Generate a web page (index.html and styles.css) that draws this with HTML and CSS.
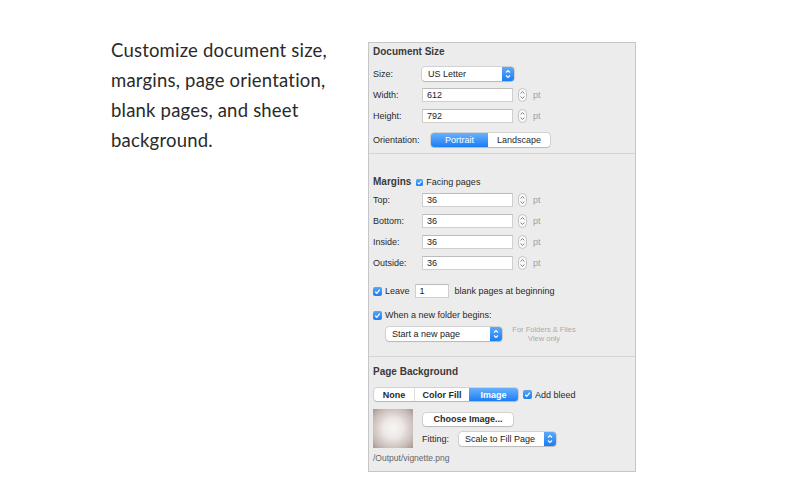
FILE: index.html
```html
<!DOCTYPE html>
<html>
<head>
<meta charset="utf-8">
<link rel="stylesheet" href="styles.css">
</head>
<body>
<div class="page">
  <p class="blurb">Customize document size,<br>margins, page orientation,<br>blank pages, and sheet<br>background.</p>
  <div class="panel">
    <section class="sec sec-size">
      <h2 class="head">Document Size</h2>
      <div class="row r-first">
        <span class="lbl">Size:</span>
        <div class="popup pop-size"><span class="ptext">US Letter</span><span class="cap"><svg width="12" height="14" viewBox="0 0 12 14"><path d="M4 5.5 L6 3.5 L8 5.5 M4 8.5 L6 10.5 L8 8.5" fill="none" stroke="#fff" stroke-width="1.1"/></svg></span></div>
      </div>
      <div class="row r-next">
        <span class="lbl">Width:</span>
        <div class="field">612</div>
        <svg class="stepper" width="9" height="14" viewBox="0 0 9 14"><rect x="0.5" y="0.5" width="8" height="13" rx="4" fill="#f9f9f9" stroke="#c4c4c4"/><path d="M2.6 5.4 L4.5 3.6 L6.4 5.4 M2.6 8.6 L4.5 10.4 L6.4 8.6" fill="none" stroke="#707070" stroke-width="0.9"/></svg>
        <span class="unit">pt</span>
      </div>
      <div class="row r-next">
        <span class="lbl">Height:</span>
        <div class="field">792</div>
        <svg class="stepper" width="9" height="14" viewBox="0 0 9 14"><rect x="0.5" y="0.5" width="8" height="13" rx="4" fill="#f9f9f9" stroke="#c4c4c4"/><path d="M2.6 5.4 L4.5 3.6 L6.4 5.4 M2.6 8.6 L4.5 10.4 L6.4 8.6" fill="none" stroke="#707070" stroke-width="0.9"/></svg>
        <span class="unit">pt</span>
      </div>
      <div class="row r-orient">
        <span class="lbl lbl-orient">Orientation:</span>
        <div class="seg seg-orient"><span class="on s-portrait">Portrait</span><span class="s-land">Landscape</span></div>
      </div>
    </section>

    <section class="sec sec-margins">
      <div class="head-row">
        <h2 class="head">Margins</h2>
        <span class="cb cb-small"><svg width="7" height="7" viewBox="0 0 7 7"><path d="M1.6 3.7 L3 5 L5.4 1.9" fill="none" stroke="#fff" stroke-width="1.1"/></svg></span>
        <span class="cb-text">Facing pages</span>
      </div>
      <div class="row r-top">
        <span class="lbl">Top:</span>
        <div class="field">36</div>
        <svg class="stepper" width="9" height="14" viewBox="0 0 9 14"><rect x="0.5" y="0.5" width="8" height="13" rx="4" fill="#f9f9f9" stroke="#c4c4c4"/><path d="M2.6 5.4 L4.5 3.6 L6.4 5.4 M2.6 8.6 L4.5 10.4 L6.4 8.6" fill="none" stroke="#707070" stroke-width="0.9"/></svg>
        <span class="unit">pt</span>
      </div>
      <div class="row r-next">
        <span class="lbl">Bottom:</span>
        <div class="field">36</div>
        <svg class="stepper" width="9" height="14" viewBox="0 0 9 14"><rect x="0.5" y="0.5" width="8" height="13" rx="4" fill="#f9f9f9" stroke="#c4c4c4"/><path d="M2.6 5.4 L4.5 3.6 L6.4 5.4 M2.6 8.6 L4.5 10.4 L6.4 8.6" fill="none" stroke="#707070" stroke-width="0.9"/></svg>
        <span class="unit">pt</span>
      </div>
      <div class="row r-next">
        <span class="lbl">Inside:</span>
        <div class="field">36</div>
        <svg class="stepper" width="9" height="14" viewBox="0 0 9 14"><rect x="0.5" y="0.5" width="8" height="13" rx="4" fill="#f9f9f9" stroke="#c4c4c4"/><path d="M2.6 5.4 L4.5 3.6 L6.4 5.4 M2.6 8.6 L4.5 10.4 L6.4 8.6" fill="none" stroke="#707070" stroke-width="0.9"/></svg>
        <span class="unit">pt</span>
      </div>
      <div class="row r-next">
        <span class="lbl">Outside:</span>
        <div class="field">36</div>
        <svg class="stepper" width="9" height="14" viewBox="0 0 9 14"><rect x="0.5" y="0.5" width="8" height="13" rx="4" fill="#f9f9f9" stroke="#c4c4c4"/><path d="M2.6 5.4 L4.5 3.6 L6.4 5.4 M2.6 8.6 L4.5 10.4 L6.4 8.6" fill="none" stroke="#707070" stroke-width="0.9"/></svg>
        <span class="unit">pt</span>
      </div>
      <div class="row r-leave">
        <span class="cb"><svg width="9" height="9" viewBox="0 0 9 9"><path d="M2.2 4.7 L3.8 6.3 L6.8 2.6" fill="none" stroke="#fff" stroke-width="1.3"/></svg></span>
        <span class="cb-text">Leave</span>
        <div class="field field-short">1</div>
        <span class="after">blank pages at beginning</span>
      </div>
      <div class="row r-folder">
        <span class="cb"><svg width="9" height="9" viewBox="0 0 9 9"><path d="M2.2 4.7 L3.8 6.3 L6.8 2.6" fill="none" stroke="#fff" stroke-width="1.3"/></svg></span>
        <span class="cb-text">When a new folder begins:</span>
      </div>
      <div class="row r-newpage">
        <div class="popup pop-page"><span class="ptext">Start a new page</span><span class="cap"><svg width="12" height="14" viewBox="0 0 12 14"><path d="M4 5.5 L6 3.5 L8 5.5 M4 8.5 L6 10.5 L8 8.5" fill="none" stroke="#fff" stroke-width="1.1"/></svg></span></div>
        <div class="note">For Folders &amp; Files<br>View only</div>
      </div>
    </section>

    <section class="sec sec-bg">
      <h2 class="head">Page Background</h2>
      <div class="row r-seg">
        <div class="seg seg-bg"><span class="s-none">None</span><span class="s-fill">Color Fill</span><span class="on s-image">Image</span></div>
        <span class="cb cb-bleed"><svg width="9" height="9" viewBox="0 0 9 9"><path d="M2.2 4.7 L3.8 6.3 L6.8 2.6" fill="none" stroke="#fff" stroke-width="1.3"/></svg></span>
        <span class="cb-text">Add bleed</span>
      </div>
      <div class="img-row">
        <div class="thumb"></div>
        <div class="img-ctrls">
          <div class="btn">Choose Image...</div>
          <div class="row r-fit">
            <span class="fit-lbl">Fitting:</span>
            <div class="popup pop-fit"><span class="ptext">Scale to Fill Page</span><span class="cap"><svg width="12" height="14" viewBox="0 0 12 14"><path d="M4 5.5 L6 3.5 L8 5.5 M4 8.5 L6 10.5 L8 8.5" fill="none" stroke="#fff" stroke-width="1.1"/></svg></span></div>
          </div>
        </div>
      </div>
      <div class="path">/Output/vignette.png</div>
    </section>
  </div>
</div>
</body>
</html>
```

FILE: styles.css
```css
* { box-sizing: border-box; }

body {
  margin: 0;
  background: #ffffff;
}

.page {
  display: flex;
  align-items: flex-start;
  width: 800px;
  height: 500px;
}

.blurb {
  flex-shrink: 0;
  width: 368px;
  margin: 35px 0 0 0;
  padding-left: 111px;
  font-family: Lato, "Open Sans", sans-serif;
  font-size: 18.5px;
  letter-spacing: 0.2px;
  line-height: 30px;
  color: #2a2a2a;
}

.panel {
  flex-shrink: 0;
  margin-top: 42px;
  width: 268px;
  height: 430px;
  background: #ececec;
  border: 1px solid #c6c6c6;
  font-family: "Liberation Sans", Arial, sans-serif;
  font-size: 9px;
  color: #2a2a2a;
  display: flex;
  flex-direction: column;
}

.sec {
  display: flex;
  flex-direction: column;
  padding-left: 4px;
  border-bottom: 1px solid #d5d5d5;
}

.sec-size { padding-top: 3px; padding-bottom: 6px; }
.sec-margins { padding-top: 21px; padding-bottom: 15px; }
.sec-bg { padding-top: 9px; border-bottom: none; }

.head {
  margin: 0;
  font-size: 10px;
  font-weight: bold;
  line-height: 12px;
  color: #3a3a3a;
}

.head-row {
  display: flex;
  align-items: center;
  height: 12px;
  margin-top: 1px;
}

.row {
  display: flex;
  align-items: center;
  height: 14px;
}

.r-first { margin-top: 9px; }
.r-next { margin-top: 7px; }
.r-orient { margin-top: 10px; }
.r-top { margin-top: 5px; }
.r-leave { margin-top: 14px; }
.r-folder { margin-top: 11px; height: 12px; }
.r-newpage { margin-top: 6px; padding-left: 13px; }
.r-seg { margin-top: 10px; height: 13px; }
.r-fit { margin-top: 6px; }

.lbl {
  width: 49px;
  flex-shrink: 0;
}

.lbl-orient { width: 58px; }

.field {
  width: 91px;
  height: 14px;
  background: #ffffff;
  border: 1px solid #cfcfcf;
  border-top-color: #bcbcbc;
  padding-left: 4px;
  line-height: 12px;
  color: #222222;
}

.field-short {
  width: 34px;
  margin-left: 5px;
}

.stepper {
  margin-left: 5px;
  flex-shrink: 0;
}

.unit {
  margin-left: 6px;
  color: #a0a0a0;
}

.popup {
  display: flex;
  align-items: center;
  height: 14px;
  background: #ffffff;
  border-radius: 3px;
  box-shadow: 0 0 0 0.5px rgba(0, 0, 0, 0.22), 0 1px 1px rgba(0, 0, 0, 0.12);
}

.ptext {
  flex: 1;
  padding-left: 6px;
  color: #222222;
}

.cap {
  width: 12px;
  height: 14px;
  display: flex;
  border-radius: 0 3px 3px 0;
  background: linear-gradient(#5ea9fb, #1b7cf4);
}

.pop-size { width: 92px; }
.pop-page { width: 116px; }
.pop-fit { width: 97px; margin-left: 11px; }

.seg {
  display: flex;
  height: 14px;
  background: #ffffff;
  border-radius: 3px;
  box-shadow: 0 0 0 0.5px rgba(0, 0, 0, 0.22), 0 1px 1px rgba(0, 0, 0, 0.12);
  overflow: hidden;
}

.seg span {
  display: flex;
  align-items: center;
  justify-content: center;
  color: #2a2a2a;
}

.seg span + span { border-left: 1px solid #dcdcdc; }

.seg .on {
  background: linear-gradient(#69b1fb, #1c7ef5);
  color: #ffffff;
  border-left: none;
}

.seg .on + span { border-left: none; }

.s-portrait { width: 57px; }
.s-land { width: 62px; }

.seg-bg {
  height: 13px;
  margin-left: 1px;
  font-weight: bold;
}

.s-none { width: 40px; }
.s-fill { width: 55px; }
.s-image { width: 49px; }

.cb {
  display: inline-flex;
  width: 9px;
  height: 9px;
  flex-shrink: 0;
  border-radius: 2px;
  background: linear-gradient(#56a6fa, #1b7ef4);
}

.cb-small {
  width: 7px;
  height: 7px;
  margin-left: 5px;
  border-radius: 1.5px;
}

.cb-text { margin-left: 3px; }

.cb-bleed { margin-left: 5px; }

.after { margin-left: 6px; }

.note {
  width: 64px;
  margin-left: 10px;
  text-align: center;
  font-size: 7.5px;
  line-height: 9px;
  color: #ababab;
}

.img-row {
  display: flex;
  margin-top: 8px;
}

.thumb {
  width: 40px;
  height: 39px;
  flex-shrink: 0;
  background: radial-gradient(ellipse at center, #f7f5f4 0%, #ede8e6 35%, #c9bcb8 75%, #a8958f 100%);
}

.img-ctrls {
  display: flex;
  flex-direction: column;
  margin-left: 9px;
  padding-top: 4px;
}

.btn {
  width: 90px;
  height: 13px;
  margin-left: 1px;
  background: #ffffff;
  border-radius: 3px;
  box-shadow: 0 0 0 0.5px rgba(0, 0, 0, 0.22), 0 1px 1px rgba(0, 0, 0, 0.12);
  font-weight: bold;
  text-align: center;
  line-height: 13px;
  color: #2a2a2a;
}

.fit-lbl { width: 26px; }

.path {
  margin-top: 5px;
  line-height: 11px;
  font-size: 8.5px;
  color: #666666;
}
```
